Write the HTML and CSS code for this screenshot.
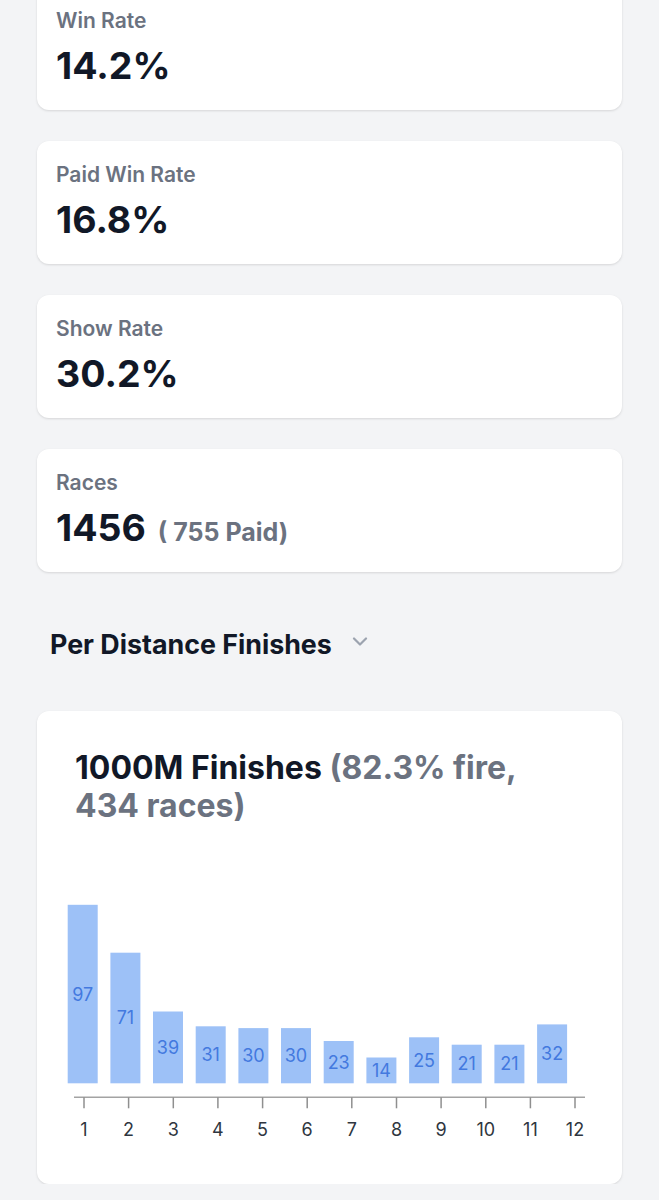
FILE: index.html
```html
<!DOCTYPE html>
<html lang="en">
<head>
<meta charset="utf-8">
<title>Stats</title>
<link rel="stylesheet" href="styles.css">
</head>
<body>
<main class="page">
  <section class="stats">
    <div class="card stat">
      <div class="stat-label">Win Rate</div>
      <div class="stat-value">14.2%</div>
    </div>
    <div class="card stat">
      <div class="stat-label">Paid Win Rate</div>
      <div class="stat-value">16.8%</div>
    </div>
    <div class="card stat">
      <div class="stat-label">Show Rate</div>
      <div class="stat-value">30.2%</div>
    </div>
    <div class="card stat">
      <div class="stat-label">Races</div>
      <div class="stat-value"><span>1456</span><span class="stat-sub">( 755 Paid)</span></div>
    </div>
  </section>

  <div class="section-head">
    <h2 class="section-title">Per Distance Finishes</h2>
    <svg class="chevron" width="16" height="9" viewBox="0 0 16 9"><path d="M2 1.5 L8 7.5 L14 1.5" fill="none" stroke="#9ca3af" stroke-width="2.2" stroke-linecap="round" stroke-linejoin="round"/></svg>
  </div>

  <section class="card chart-card">
    <h3 class="chart-title">1000M Finishes <span class="muted">(82.3% fire,<br>434 races)</span></h3>
    <svg class="chart" width="585" height="320" viewBox="0 0 585 320">
      <g class="bars">
        <rect x="30.7" y="65.8" width="30" height="178.5"/>
        <rect x="73.4" y="113.7" width="30" height="130.6"/>
        <rect x="116.0" y="172.5" width="30" height="71.8"/>
        <rect x="158.7" y="187.3" width="30" height="57.0"/>
        <rect x="201.4" y="189.1" width="30" height="55.2"/>
        <rect x="244.0" y="189.1" width="30" height="55.2"/>
        <rect x="286.7" y="202.0" width="30" height="42.3"/>
        <rect x="329.4" y="218.5" width="30" height="25.8"/>
        <rect x="372.1" y="198.3" width="30" height="46.0"/>
        <rect x="414.7" y="205.7" width="30" height="38.6"/>
        <rect x="457.4" y="205.7" width="30" height="38.6"/>
        <rect x="500.1" y="185.4" width="30" height="58.9"/>
      </g>
      <g class="bar-labels">
        <text x="45.7" y="161.5">97</text>
        <text x="88.4" y="185.4">71</text>
        <text x="131.0" y="214.8">39</text>
        <text x="173.7" y="222.2">31</text>
        <text x="216.4" y="223.1">30</text>
        <text x="259.0" y="223.1">30</text>
        <text x="301.7" y="229.6">23</text>
        <text x="344.4" y="237.8">14</text>
        <text x="387.1" y="227.7">25</text>
        <text x="429.7" y="231.4">21</text>
        <text x="472.4" y="231.4">21</text>
        <text x="515.1" y="221.3">32</text>
      </g>
      <line class="axis" x1="37" y1="258.3" x2="548" y2="258.3"/>
      <g class="ticks">
        <line x1="47" y1="258.3" x2="47" y2="269.3"/>
        <line x1="91.6" y1="258.3" x2="91.6" y2="269.3"/>
        <line x1="136.3" y1="258.3" x2="136.3" y2="269.3"/>
        <line x1="180.9" y1="258.3" x2="180.9" y2="269.3"/>
        <line x1="225.6" y1="258.3" x2="225.6" y2="269.3"/>
        <line x1="270.2" y1="258.3" x2="270.2" y2="269.3"/>
        <line x1="314.8" y1="258.3" x2="314.8" y2="269.3"/>
        <line x1="359.5" y1="258.3" x2="359.5" y2="269.3"/>
        <line x1="404.1" y1="258.3" x2="404.1" y2="269.3"/>
        <line x1="448.8" y1="258.3" x2="448.8" y2="269.3"/>
        <line x1="493.4" y1="258.3" x2="493.4" y2="269.3"/>
        <line x1="538" y1="258.3" x2="538" y2="269.3"/>
      </g>
      <g class="tick-labels">
        <text x="47" y="296.5">1</text>
        <text x="91.6" y="296.5">2</text>
        <text x="136.3" y="296.5">3</text>
        <text x="180.9" y="296.5">4</text>
        <text x="225.6" y="296.5">5</text>
        <text x="270.2" y="296.5">6</text>
        <text x="314.8" y="296.5">7</text>
        <text x="359.5" y="296.5">8</text>
        <text x="404.1" y="296.5">9</text>
        <text x="448.8" y="296.5">10</text>
        <text x="493.4" y="296.5">11</text>
        <text x="538" y="296.5">12</text>
      </g>
    </svg>
  </section>
</main>
</body>
</html>
```

FILE: styles.css
```css
* { box-sizing: border-box; }

html, body {
  margin: 0;
  padding: 0;
  background: #f3f4f6;
  font-family: Inter, "Noto Sans", "Liberation Sans", sans-serif;
  color: #111827;
}

.page {
  margin-top: -13px;
  padding: 0 37px;
}

.stats {
  display: flex;
  flex-direction: column;
  gap: 31px;
}

.card {
  background: #ffffff;
  border-radius: 12px;
  box-shadow: 0 1px 3px rgba(0, 0, 0, 0.08), 0 1px 2px rgba(0, 0, 0, 0.05);
}

.stat {
  height: 123px;
  padding: 20px 19px 0;
}

.stat-label {
  font-size: 21px;
  line-height: 28px;
  font-weight: 600;
  color: #6b7280;
  margin-bottom: 11px;
}

.stat-value {
  display: flex;
  align-items: baseline;
  gap: 12px;
  font-size: 37.5px;
  line-height: 40px;
  font-weight: 700;
  color: #111827;
}

.stat-sub {
  font-size: 25px;
  font-weight: 700;
  color: #6b7280;
}

.section-head {
  display: flex;
  align-items: center;
  gap: 20px;
  margin: 56px 0 0;
  padding-left: 13px;
}

.section-title {
  margin: 0;
  font-size: 26.8px;
  line-height: 32px;
  font-weight: 700;
  color: #111827;
}

.chevron {
  margin-bottom: 5px;
}

.chart-card {
  margin-top: 51px;
  padding: 38px 0 25px;
}

.chart-title {
  margin: 0 38px 14px;
  font-size: 32px;
  line-height: 38px;
  font-weight: 700;
  color: #111827;
}

.muted {
  color: #6b7280;
}

.chart {
  display: block;
}

.bars rect {
  fill: #9dc1f7;
}

.bar-labels text {
  font-family: Inter, "Noto Sans", sans-serif;
  font-size: 18px;
  fill: #4379df;
  text-anchor: middle;
}

.axis {
  stroke: #a3a3a3;
  stroke-width: 1.5;
}

.ticks line {
  stroke: #8f8f8f;
  stroke-width: 1.5;
}

.tick-labels text {
  font-family: Inter, "Noto Sans", sans-serif;
  font-size: 18px;
  fill: #2f3640;
  text-anchor: middle;
}
```
